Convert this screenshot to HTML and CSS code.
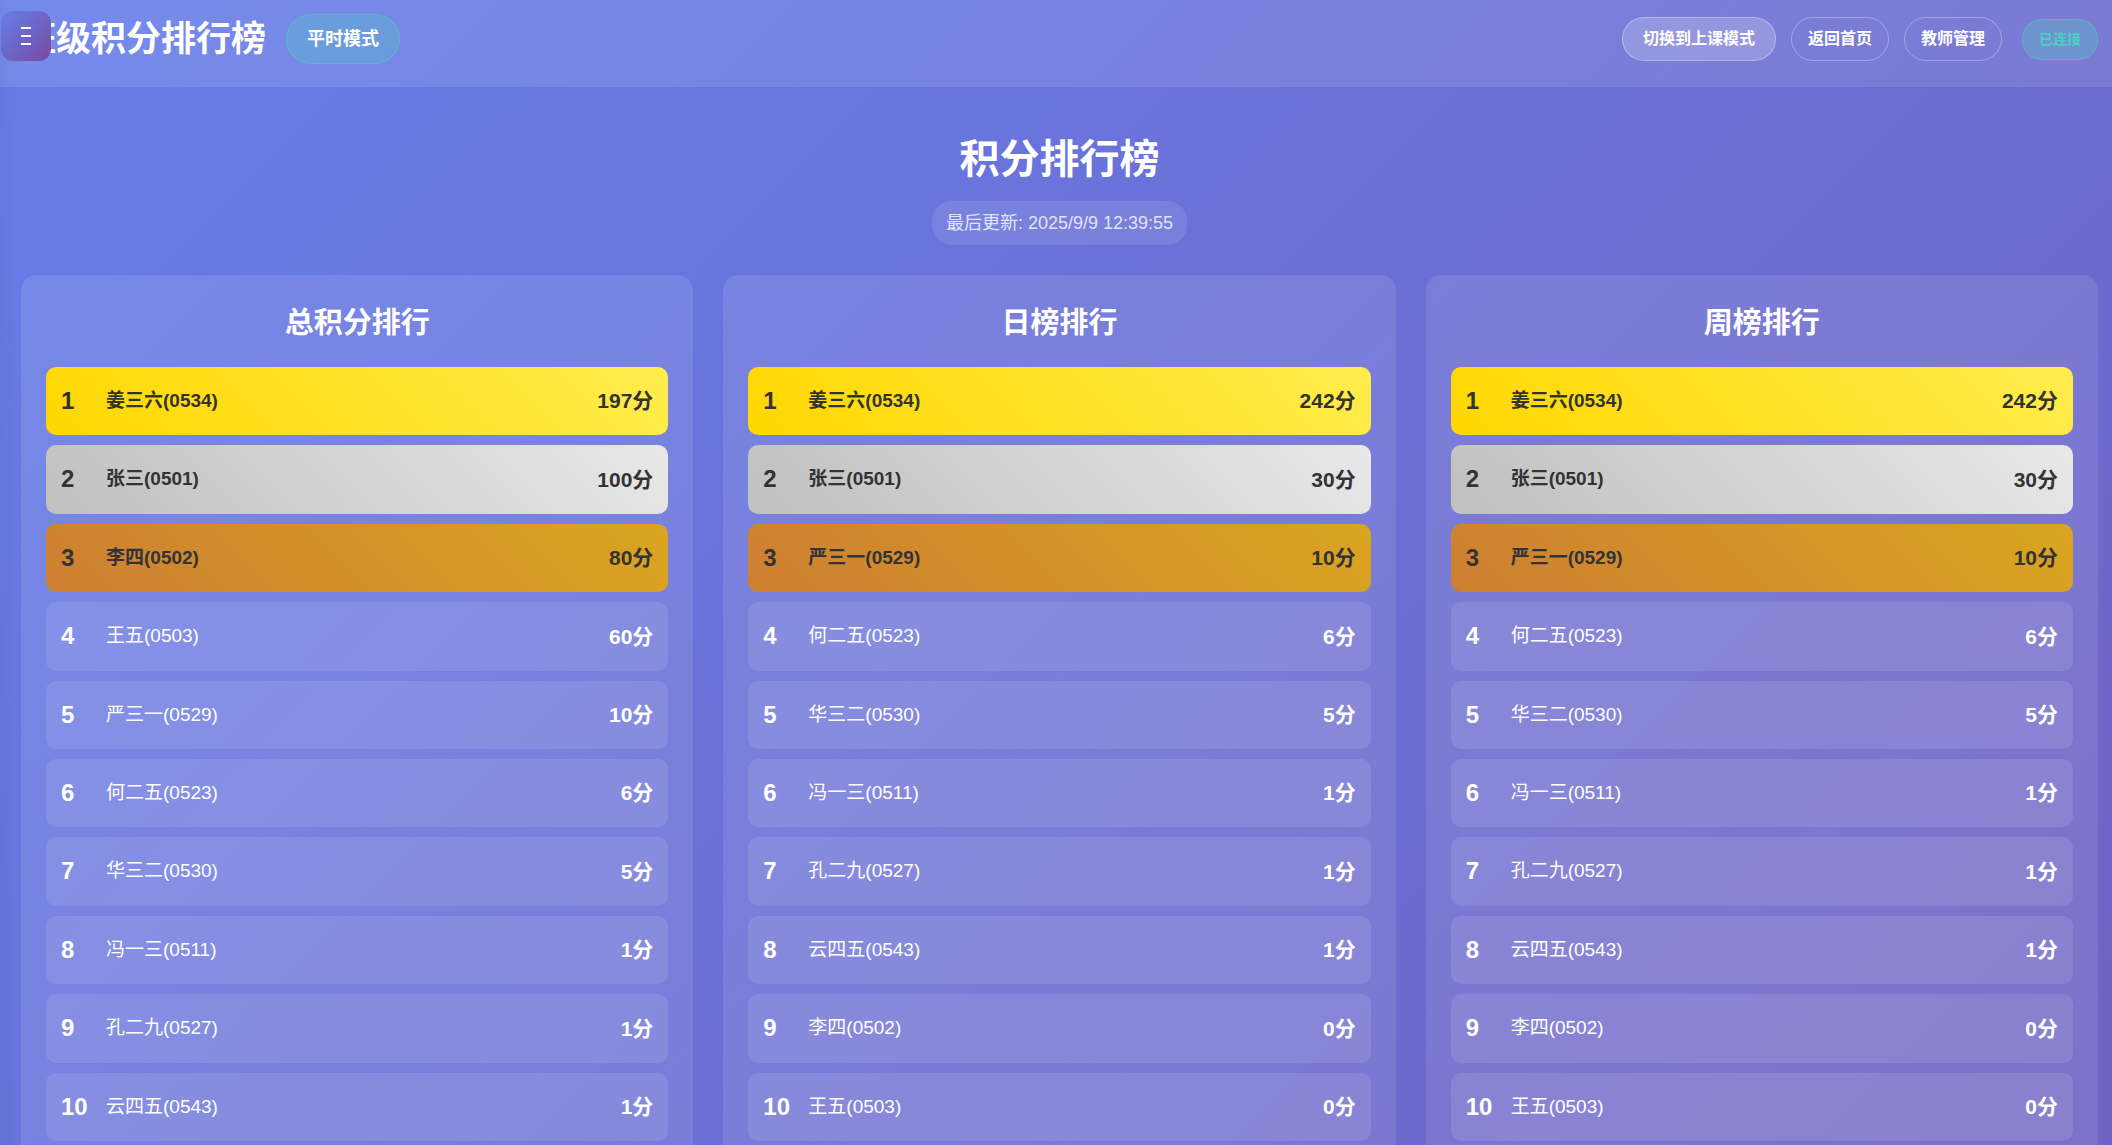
FILE: index.html
```
<!DOCTYPE html>
<html lang="zh-CN">
<head>
<meta charset="utf-8">
<title>班级积分排行榜</title>
<link rel="stylesheet" href="styles.css">
</head>
<body>
<button class="menu-toggle" type="button" aria-label="菜单">
  <svg width="10" height="18" viewBox="0 0 10 18" aria-hidden="true"><path d="M0 1h10M0 9h10M0 17h10" stroke="#fff" stroke-width="2"/></svg>
</button>
<header class="header">
  <div class="brand">
    <h1 class="brand-title">班级积分排行榜</h1>
    <span class="mode">平时模式</span>
  </div>
  <nav class="actions">
    <button class="btn btn-primary" type="button">切换到上课模式</button>
    <a class="btn" href="#">返回首页</a>
    <a class="btn" href="#">教师管理</a>
    <span class="status">已连接</span>
  </nav>
</header>
<main class="main">
  <div class="intro">
    <h2 class="intro-title">积分排行榜</h2>
    <p class="updated">最后更新: 2025/9/9 12:39:55</p>
  </div>
  <div class="boards">
    <section class="board">
      <h3 class="board-title">总积分排行</h3>
      <ol class="list">
        <li class="row gold"><span class="rank">1</span><span class="name">姜三六(0534)</span><span class="score">197分</span></li>
        <li class="row silver"><span class="rank">2</span><span class="name">张三(0501)</span><span class="score">100分</span></li>
        <li class="row bronze"><span class="rank">3</span><span class="name">李四(0502)</span><span class="score">80分</span></li>
        <li class="row"><span class="rank">4</span><span class="name">王五(0503)</span><span class="score">60分</span></li>
        <li class="row"><span class="rank">5</span><span class="name">严三一(0529)</span><span class="score">10分</span></li>
        <li class="row"><span class="rank">6</span><span class="name">何二五(0523)</span><span class="score">6分</span></li>
        <li class="row"><span class="rank">7</span><span class="name">华三二(0530)</span><span class="score">5分</span></li>
        <li class="row"><span class="rank">8</span><span class="name">冯一三(0511)</span><span class="score">1分</span></li>
        <li class="row"><span class="rank">9</span><span class="name">孔二九(0527)</span><span class="score">1分</span></li>
        <li class="row"><span class="rank">10</span><span class="name">云四五(0543)</span><span class="score">1分</span></li>
      </ol>
    </section>
    <section class="board">
      <h3 class="board-title">日榜排行</h3>
      <ol class="list">
        <li class="row gold"><span class="rank">1</span><span class="name">姜三六(0534)</span><span class="score">242分</span></li>
        <li class="row silver"><span class="rank">2</span><span class="name">张三(0501)</span><span class="score">30分</span></li>
        <li class="row bronze"><span class="rank">3</span><span class="name">严三一(0529)</span><span class="score">10分</span></li>
        <li class="row"><span class="rank">4</span><span class="name">何二五(0523)</span><span class="score">6分</span></li>
        <li class="row"><span class="rank">5</span><span class="name">华三二(0530)</span><span class="score">5分</span></li>
        <li class="row"><span class="rank">6</span><span class="name">冯一三(0511)</span><span class="score">1分</span></li>
        <li class="row"><span class="rank">7</span><span class="name">孔二九(0527)</span><span class="score">1分</span></li>
        <li class="row"><span class="rank">8</span><span class="name">云四五(0543)</span><span class="score">1分</span></li>
        <li class="row"><span class="rank">9</span><span class="name">李四(0502)</span><span class="score">0分</span></li>
        <li class="row"><span class="rank">10</span><span class="name">王五(0503)</span><span class="score">0分</span></li>
      </ol>
    </section>
    <section class="board">
      <h3 class="board-title">周榜排行</h3>
      <ol class="list">
        <li class="row gold"><span class="rank">1</span><span class="name">姜三六(0534)</span><span class="score">242分</span></li>
        <li class="row silver"><span class="rank">2</span><span class="name">张三(0501)</span><span class="score">30分</span></li>
        <li class="row bronze"><span class="rank">3</span><span class="name">严三一(0529)</span><span class="score">10分</span></li>
        <li class="row"><span class="rank">4</span><span class="name">何二五(0523)</span><span class="score">6分</span></li>
        <li class="row"><span class="rank">5</span><span class="name">华三二(0530)</span><span class="score">5分</span></li>
        <li class="row"><span class="rank">6</span><span class="name">冯一三(0511)</span><span class="score">1分</span></li>
        <li class="row"><span class="rank">7</span><span class="name">孔二九(0527)</span><span class="score">1分</span></li>
        <li class="row"><span class="rank">8</span><span class="name">云四五(0543)</span><span class="score">1分</span></li>
        <li class="row"><span class="rank">9</span><span class="name">李四(0502)</span><span class="score">0分</span></li>
        <li class="row"><span class="rank">10</span><span class="name">王五(0503)</span><span class="score">0分</span></li>
      </ol>
    </section>
  </div>
</main>
</body>
</html>
```
FILE: styles.css
```
* {
  box-sizing: border-box;
  margin: 0;
  padding: 0;
}

html {
  scrollbar-width: none;
}

body {
  min-height: 100vh;
  font-family: "Liberation Sans", Arial, "Noto Sans CJK SC", sans-serif;
  font-size: 16px;
  line-height: 1.6;
  color: #fff;
  background: linear-gradient(135deg, #667eea, #6f62c2);
}

/* soft shade along the left window edge */
body::before {
  content: "";
  position: fixed;
  top: 0;
  bottom: 0;
  left: 0;
  width: 20px;
  background: linear-gradient(90deg, rgba(0, 0, 0, 0.03), transparent);
  pointer-events: none;
}

.menu-toggle {
  position: fixed;
  top: 11px;
  left: 1px;
  z-index: 10;
  display: flex;
  align-items: center;
  justify-content: center;
  width: 50px;
  height: 50px;
  border: none;
  border-radius: 12px;
  background: linear-gradient(135deg, #667eea, #764ba2);
  cursor: pointer;
}

.header {
  display: flex;
  align-items: center;
  justify-content: space-between;
  padding: 14px 14px 23px 21px;
  background: rgba(255, 255, 255, 0.1);
}

.brand {
  display: flex;
  align-items: center;
  gap: 20px;
}

.brand-title {
  font-size: 35px;
  line-height: 50px;
}

.mode {
  padding: 10px 20px;
  border: 1px solid rgba(78, 205, 196, 0.5);
  border-radius: 25px;
  background: rgba(78, 205, 196, 0.3);
  font-size: 18px;
  font-weight: bold;
  line-height: 28px;
}

.actions {
  display: flex;
  align-items: center;
  gap: 15px;
}

.btn {
  padding: 8px 16px;
  border: 1px solid rgba(255, 255, 255, 0.3);
  border-radius: 22px;
  background: none;
  font-family: inherit;
  font-size: 16px;
  font-weight: bold;
  line-height: 26px;
  color: #fff;
  text-decoration: none;
}

.btn-primary {
  padding: 8px 20px;
  background: rgba(255, 255, 255, 0.2);
  cursor: pointer;
}

.status {
  margin-left: 5px;
  padding: 8px 16px;
  border: 1px solid rgba(78, 205, 196, 0.5);
  border-radius: 20px;
  background: rgba(78, 205, 196, 0.3);
  font-size: 14px;
  font-weight: bold;
  line-height: 23px;
  color: #4ecdc4;
}

.main {
  padding: 40px 14px 0 21px;
}

.intro {
  display: flex;
  flex-direction: column;
  align-items: center;
  gap: 10px;
  margin-bottom: 30px;
}

.intro-title {
  font-size: 40px;
  line-height: 64px;
}

.updated {
  padding: 8px 14px;
  border-radius: 20px;
  background: rgba(255, 255, 255, 0.1);
  font-size: 18px;
  line-height: 28px;
  color: rgba(255, 255, 255, 0.8);
}

.boards {
  display: grid;
  grid-template-columns: repeat(3, 1fr);
  gap: 30px;
}

.board {
  padding: 25px;
  border-radius: 15px 15px 0 0;
  background: rgba(255, 255, 255, 0.1);
}

.board-title {
  margin-bottom: 21px;
  font-size: 29px;
  line-height: 46px;
  text-align: center;
}

.list {
  display: flex;
  flex-direction: column;
  gap: 10px;
  list-style: none;
}

.row {
  display: flex;
  align-items: center;
  padding: 15px;
  border-radius: 10px;
  background: rgba(255, 255, 255, 0.1);
}

.rank {
  min-width: 45px;
  font-size: 24px;
  font-weight: bold;
}

.name {
  flex: 1;
  font-size: 19px;
}

.score {
  font-size: 21px;
  font-weight: bold;
}

.gold,
.silver,
.bronze {
  font-weight: bold;
  color: #333;
}

.gold {
  background: linear-gradient(45deg, #ffd700, #ffed4e);
}

.silver {
  background: linear-gradient(45deg, #c0c0c0, #e8e8e8);
}

.bronze {
  background: linear-gradient(45deg, #cd7f32, #daa520);
}
```
